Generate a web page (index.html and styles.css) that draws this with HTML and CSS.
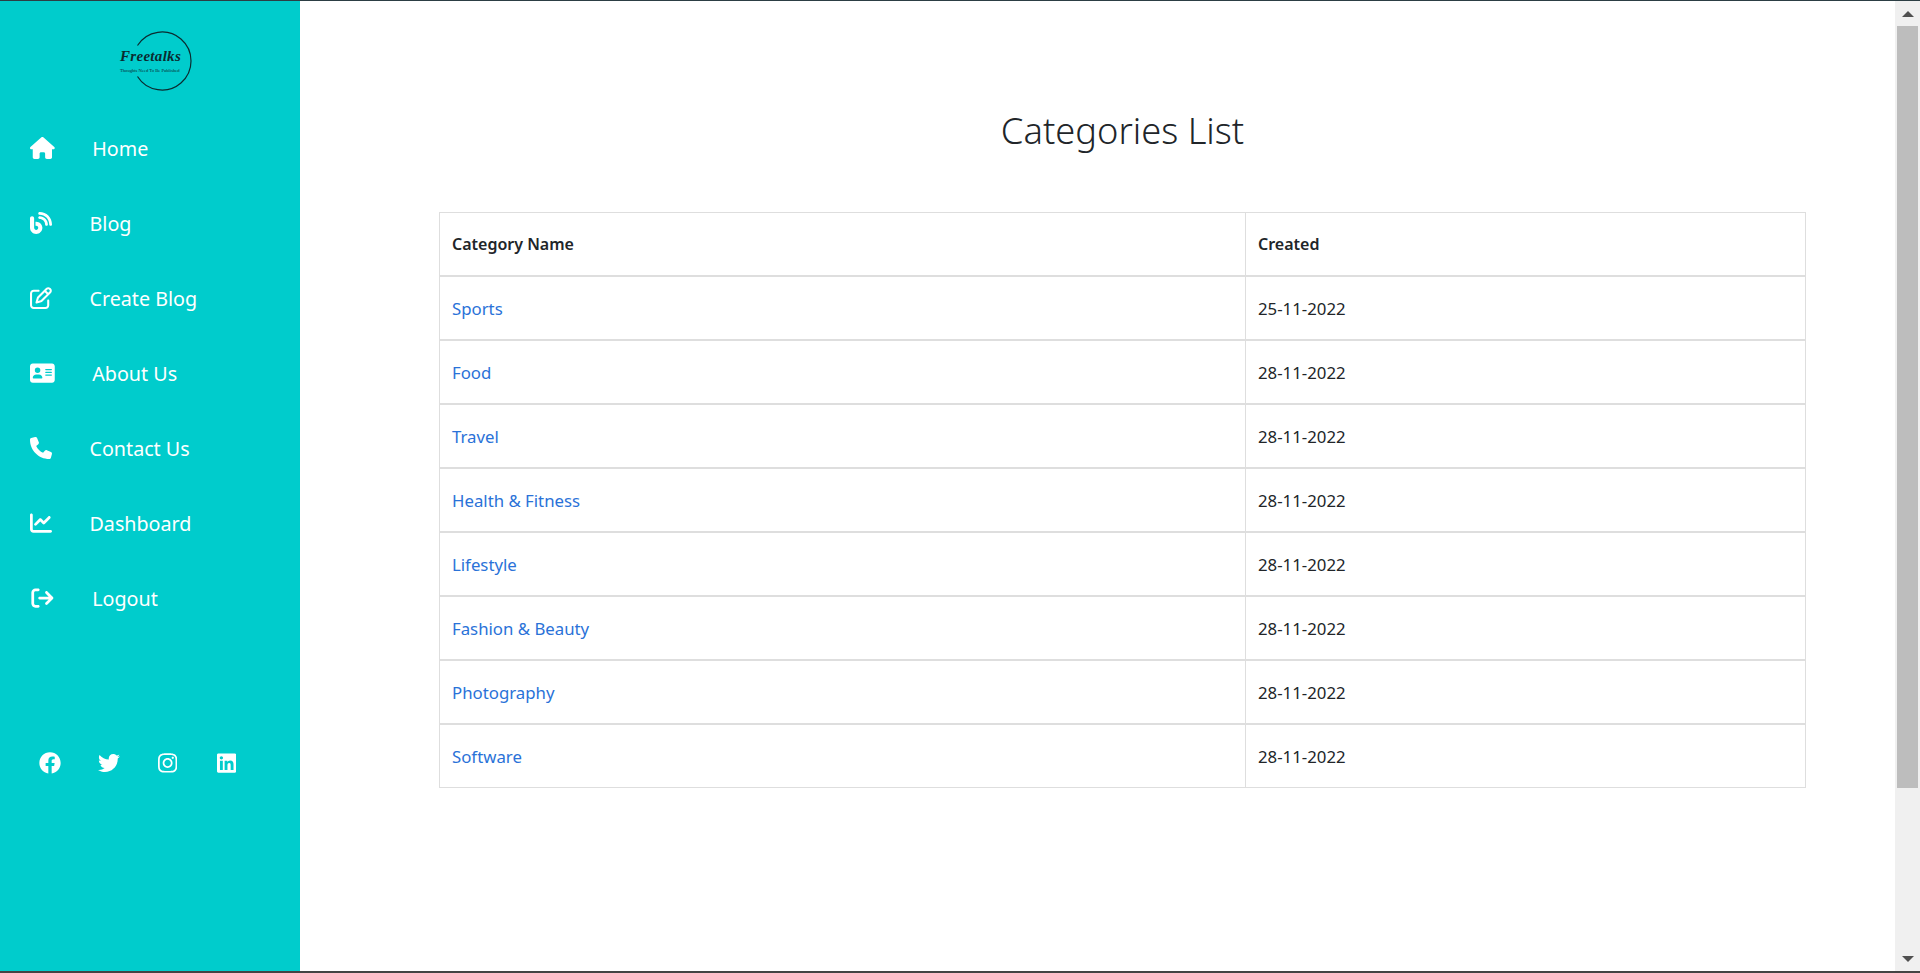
FILE: index.html
```html
<!DOCTYPE html>
<html lang="en">
<head>
    <meta charset="UTF-8">
    <meta name="viewport" content="width=device-width, initial-scale=1.0">
    <title>Categories List</title>
    <link rel="stylesheet" href="styles.css">
</head>
<body>
    <aside class="sidebar">
        <div class="logo">
            <svg class="logo-ring" viewBox="0 0 62 62"><path d="M3.5 15.5 A29 29 0 1 1 3.5 46.5" fill="none" stroke="#0b2b30" stroke-width="1.2"/></svg>
            <div class="logo-name">Freetalks</div>
            <div class="logo-tag">Thoughts Need To Be Published</div>
        </div>
        <nav class="nav">
            <a class="nav-item" href="#">
                <svg class="nav-icon" viewBox="0 0 576 512"><path d="M575.8 255.5c0 18-15 32.1-32 32.1h-32l.7 160.2c0 2.7-.2 5.4-.5 8.1V472c0 22.1-17.9 40-40 40H456c-1.1 0-2.2 0-3.3-.1c-1.4 .1-2.8 .1-4.2 .1H416 392c-22.1 0-40-17.9-40-40V448 384c0-17.7-14.3-32-32-32H256c-17.7 0-32 14.3-32 32v64 24c0 22.1-17.9 40-40 40H160 128.1c-1.5 0-3-.1-4.5-.2c-1.2 .1-2.4 .2-3.6 .2H104c-22.1 0-40-17.9-40-40V360c0-.9 0-1.9 .1-2.8V287.6H32c-18 0-32-14-32-32.1c0-9 3-17 10-24L266.4 8c7-7 15-8 22-8s15 2 21 7L564.8 231.5c8 7 12 15 11 24z"/></svg>
                <span>Home</span>
            </a>
            <a class="nav-item" href="#">
                <svg class="nav-icon" viewBox="0 0 512 512"><path d="M192 32c0 17.7 14.3 32 32 32c123.7 0 224 100.3 224 224c0 17.7 14.3 32 32 32s32-14.3 32-32C512 128.9 383.1 0 224 0c-17.7 0-32 14.3-32 32zm0 96c0 17.7 14.3 32 32 32c70.7 0 128 57.3 128 128c0 17.7 14.3 32 32 32s32-14.3 32-32c0-106-86-192-192-192c-17.7 0-32 14.3-32 32zM96 144c0-26.5-21.5-48-48-48S0 117.5 0 144V368c0 79.5 64.5 144 144 144s144-64.5 144-144s-64.5-144-144-144H128v96h16c26.5 0 48 21.5 48 48s-21.5 48-48 48s-48-21.5-48-48V144z"/></svg>
                <span>Blog</span>
            </a>
            <a class="nav-item" href="#">
                <svg class="nav-icon" viewBox="0 0 512 512"><path d="M441 58.9L453.1 71c9.4 9.4 9.4 24.6 0 33.9L424 134.1 377.9 88 407 58.9c9.4-9.4 24.6-9.4 33.9 0zM209.8 256.2L344 121.9 390.1 168 255.8 302.2c-2.9 2.9-6.5 5-10.4 6.1l-58.5 16.7 16.7-58.5c1.1-3.9 3.2-7.5 6.1-10.4zM373.1 25L175.8 222.2c-8.7 8.7-15 19.4-18.3 31.1l-28.6 100c-2.4 8.4-.1 17.4 6.1 23.6s15.2 8.5 23.6 6.1l100-28.6c11.8-3.4 22.5-9.7 31.1-18.3L487 138.9c28.1-28.1 28.1-73.7 0-101.8L474.9 25C446.8-3.1 401.2-3.1 373.1 25zM88 64C39.4 64 0 103.4 0 152V424c0 48.6 39.4 88 88 88H360c48.6 0 88-39.4 88-88V312c0-13.3-10.7-24-24-24s-24 10.7-24 24V424c0 22.1-17.9 40-40 40H88c-22.1 0-40-17.9-40-40V152c0-22.1 17.9-40 40-40H200c13.3 0 24-10.7 24-24s-10.7-24-24-24H88z"/></svg>
                <span>Create Blog</span>
            </a>
            <a class="nav-item" href="#">
                <svg class="nav-icon" viewBox="0 0 576 512"><path d="M64 32C28.7 32 0 60.7 0 96V416c0 35.3 28.7 64 64 64H512c35.3 0 64-28.7 64-64V96c0-35.3-28.7-64-64-64H64zm80 256h64c44.2 0 80 35.8 80 80c0 8.8-7.2 16-16 16H80c-8.8 0-16-7.2-16-16c0-44.2 35.8-80 80-80zm-32-96a64 64 0 1 1 128 0 64 64 0 1 1 -128 0zm256-32H496c8.8 0 16 7.2 16 16s-7.2 16-16 16H368c-8.8 0-16-7.2-16-16s7.2-16 16-16zm0 64H496c8.8 0 16 7.2 16 16s-7.2 16-16 16H368c-8.8 0-16-7.2-16-16s7.2-16 16-16zm0 64H496c8.8 0 16 7.2 16 16s-7.2 16-16 16H368c-8.8 0-16-7.2-16-16s7.2-16 16-16z"/></svg>
                <span>About Us</span>
            </a>
            <a class="nav-item" href="#">
                <svg class="nav-icon" viewBox="0 0 512 512"><path d="M164.9 24.6c-7.7-18.6-28-28.5-47.4-23.2l-88 24C12.1 30.2 0 46 0 64C0 311.4 200.6 512 448 512c18 0 33.8-12.1 38.6-29.5l24-88c5.3-19.4-4.6-39.7-23.2-47.4l-96-40c-16.3-6.8-35.2-2.1-46.3 11.6L304.7 368C234.3 334.7 177.3 277.7 144 207.3L193.3 167c13.7-11.2 18.4-30 11.6-46.3l-40-96z"/></svg>
                <span>Contact Us</span>
            </a>
            <a class="nav-item" href="#">
                <svg class="nav-icon" viewBox="0 0 512 512"><path d="M64 64c0-17.7-14.3-32-32-32S0 46.3 0 64V400c0 44.2 35.8 80 80 80H480c17.7 0 32-14.3 32-32s-14.3-32-32-32H80c-8.8 0-16-7.2-16-16V64zm406.6 86.6c12.5-12.5 12.5-32.8 0-45.3s-32.8-12.5-45.3 0L320 210.7l-57.4-57.4c-12.5-12.5-32.8-12.5-45.3 0l-112 112c-12.5 12.5-12.5 32.8 0 45.3s32.8 12.5 45.3 0L240 221.3l57.4 57.4c12.5 12.5 32.8 12.5 45.3 0l128-128z"/></svg>
                <span>Dashboard</span>
            </a>
            <a class="nav-item" href="#">
                <svg class="nav-icon" viewBox="-32 0 576 512"><path d="M502.6 278.6c12.5-12.5 12.5-32.8 0-45.3l-128-128c-12.5-12.5-32.8-12.5-45.3 0s-12.5 32.8 0 45.3L402.7 224 192 224c-17.7 0-32 14.3-32 32s14.3 32 32 32l210.7 0-73.4 73.4c-12.5 12.5-12.5 32.8 0 45.3s32.8 12.5 45.3 0l128-128zM160 96c17.7 0 32-14.3 32-32s-14.3-32-32-32L96 32C43 32 0 75 0 128L0 384c0 53 43 96 96 96l64 0c17.7 0 32-14.3 32-32s-14.3-32-32-32l-64 0c-17.7 0-32-14.3-32-32l0-256c0-17.7 14.3-32 32-32l64 0z"/></svg>
                <span>Logout</span>
            </a>
        </nav>
        <div class="social">
            <a class="social-link" href="#"><svg class="social-icon" viewBox="0 0 512 512"><path d="M504 256C504 119 393 8 256 8S8 119 8 256c0 123.78 90.69 226.38 209.25 245V327.69h-63V256h63v-54.64c0-62.15 37-96.48 93.67-96.48 27.14 0 55.52 4.84 55.52 4.84v61h-31.28c-30.8 0-40.41 19.12-40.41 38.73V256h68.78l-11 71.69h-57.78V501C413.31 482.38 504 379.78 504 256z"/></svg></a>
            <a class="social-link" href="#"><svg class="social-icon" viewBox="0 0 512 512"><path d="M459.37 151.716c.325 4.548.325 9.097.325 13.645 0 138.72-105.583 298.558-298.558 298.558-59.452 0-114.68-17.219-161.137-47.106 8.447.974 16.568 1.299 25.34 1.299 49.055 0 94.213-16.568 130.274-44.832-46.132-.975-84.792-31.188-98.112-72.772 6.498.974 12.995 1.624 19.818 1.624 9.421 0 18.843-1.3 27.614-3.573-48.081-9.747-84.143-51.98-84.143-102.985v-1.299c13.969 7.797 30.214 12.67 47.431 13.319-28.264-18.843-46.781-51.005-46.781-87.391 0-19.492 5.197-37.36 14.294-52.954 51.655 63.675 129.3 105.258 216.365 109.807-1.624-7.797-2.599-15.918-2.599-24.04 0-57.828 46.782-104.934 104.934-104.934 30.213 0 57.502 12.67 76.67 33.137 23.715-4.548 46.456-13.32 66.599-25.34-7.798 24.366-24.366 44.833-46.132 57.827 21.117-2.273 41.584-8.122 60.426-16.243-14.292 20.791-32.161 39.308-52.628 54.253z"/></svg></a>
            <a class="social-link" href="#"><svg class="social-icon" viewBox="0 0 448 512"><path d="M224.1 141c-63.6 0-114.9 51.3-114.9 114.9s51.3 114.9 114.9 114.9S339 319.5 339 255.9 287.7 141 224.1 141zm0 189.6c-41.1 0-74.7-33.5-74.7-74.7s33.5-74.7 74.7-74.7 74.7 33.5 74.7 74.7-33.6 74.7-74.7 74.7zm146.4-194.3c0 14.9-12 26.8-26.8 26.8-14.9 0-26.8-12-26.8-26.8s12-26.8 26.8-26.8 26.8 12 26.8 26.8zm76.1 27.2c-1.7-35.9-9.9-67.7-36.2-93.9-26.2-26.2-58-34.4-93.9-36.2-37-2.1-147.9-2.1-184.9 0-35.8 1.7-67.6 9.9-93.9 36.1s-34.4 58-36.2 93.9c-2.1 37-2.1 147.9 0 184.9 1.7 35.9 9.9 67.7 36.2 93.9s58 34.4 93.9 36.2c37 2.1 147.9 2.1 184.9 0 35.9-1.7 67.7-9.9 93.9-36.2 26.2-26.2 34.4-58 36.2-93.9 2.1-37 2.1-147.8 0-184.8zM398.8 388c-7.8 19.6-22.9 34.7-42.6 42.6-29.5 11.7-99.5 9-132.1 9s-102.7 2.6-132.1-9c-19.6-7.8-34.7-22.9-42.6-42.6-11.7-29.5-9-99.5-9-132.1s-2.6-102.7 9-132.1c7.8-19.6 22.9-34.7 42.6-42.6 29.5-11.7 99.5-9 132.1-9s102.7-2.6 132.1 9c19.6 7.8 34.7 22.9 42.6 42.6 11.7 29.5 9 99.5 9 132.1s2.7 102.7-9 132.1z"/></svg></a>
            <a class="social-link" href="#"><svg class="social-icon" viewBox="0 0 448 512"><path d="M416 32H31.9C14.3 32 0 46.5 0 64.3v383.4C0 465.5 14.3 480 31.9 480H416c17.6 0 32-14.5 32-32.3V64.3c0-17.8-14.4-32.3-32-32.3zM135.4 416H69V202.2h66.5V416zm-33.2-243c-21.3 0-38.5-17.3-38.5-38.5S80.9 96 102.2 96c21.2 0 38.5 17.3 38.5 38.5 0 21.3-17.2 38.5-38.5 38.5zm282.1 243h-66.4V312c0-24.8-.5-56.7-34.5-56.7-34.6 0-39.9 26.9-39.9 54.6V416h-66.4V202.2h63.7v29.2h.9c8.9-16.8 30.6-34.5 62.9-34.5 67.2 0 79.7 44.3 79.7 101.9V416z"/></svg></a>
        </div>
    </aside>

    <main class="content">
        <h1 class="page-title">Categories List</h1>
        <table class="cat-table">
            <thead>
                <tr><th class="col-name">Category Name</th><th>Created</th></tr>
            </thead>
            <tbody>
                <tr><td><a href="#">Sports</a></td><td>25-11-2022</td></tr>
                <tr><td><a href="#">Food</a></td><td>28-11-2022</td></tr>
                <tr><td><a href="#">Travel</a></td><td>28-11-2022</td></tr>
                <tr><td><a href="#">Health &amp; Fitness</a></td><td>28-11-2022</td></tr>
                <tr><td><a href="#">Lifestyle</a></td><td>28-11-2022</td></tr>
                <tr><td><a href="#">Fashion &amp; Beauty</a></td><td>28-11-2022</td></tr>
                <tr><td><a href="#">Photography</a></td><td>28-11-2022</td></tr>
                <tr><td><a href="#">Software</a></td><td>28-11-2022</td></tr>
            </tbody>
        </table>
    </main>

    <div class="scrollbar">
        <div class="arrow-box"><span class="arrow-up"></span></div>
        <div class="thumb"></div>
        <div class="track-rest"></div>
        <div class="arrow-box"><span class="arrow-down"></span></div>
    </div>
</body>
</html>
```

FILE: styles.css
```css
* {
    box-sizing: border-box;
}
html {
    height: 100%;
}
body {
    margin: 0;
    height: 973px;
    overflow: hidden;
    display: flex;
    border-top: 1px solid #2c3e44;
    border-bottom: 2px solid #444444;
    background-color: #ffffff;
    color: #212529;
    font-family: "Noto Sans", sans-serif;
}

/* sidebar */
.sidebar {
    width: 300px;
    flex-shrink: 0;
    background-color: #00cccc;
    padding-top: 29px;
}
.logo {
    position: relative;
    height: 81px;
    margin-left: 120px;
    padding-top: 16px;
}
.logo-ring {
    position: absolute;
    left: 14px;
    top: 0;
    width: 62px;
    height: 62px;
}
.logo-name {
    font-family: "Liberation Serif", serif;
    font-style: italic;
    font-weight: bold;
    font-size: 15px;
    line-height: 20px;
    color: #0b2b30;
    letter-spacing: 0.3px;
}
.logo-tag {
    font-family: "Liberation Serif", serif;
    font-size: 4.6px;
    line-height: 7px;
    margin-top: 1px;
    color: #0b2b30;
    white-space: nowrap;
}
.nav {
    display: flex;
    flex-direction: column;
}
.nav-item {
    display: flex;
    align-items: center;
    gap: 37.5px;
    height: 75px;
    padding-left: 30px;
    color: #ffffff;
    font-size: 19.7px;
    text-decoration: none;
}
.nav-icon {
    height: 22px;
    flex-shrink: 0;
    fill: #ffffff;
    margin-top: -1px;
}
.social {
    display: flex;
    margin-top: 116px;
    padding-left: 20px;
}
.social-link {
    display: flex;
    justify-content: center;
    width: 59px;
}
.social-icon {
    height: 22px;
    fill: #ffffff;
}

/* main */
.content {
    flex: 1;
    min-width: 0;
    padding: 105px 89px 0 139px;
}
.page-title {
    margin: 0 0 58px;
    font-size: 36.3px;
    font-weight: 350;
    line-height: 48px;
    text-align: center;
}
.cat-table {
    width: 100%;
    table-layout: fixed;
    border-collapse: collapse;
    font-size: 16.8px;
}
.cat-table th,
.cat-table td {
    height: 64px;
    padding: 2px 12px 0;
    border: 1px solid #dedede;
    border-bottom-width: 2px;
    text-align: left;
}
.cat-table th {
    height: 63px;
    padding-top: 0;
    font-size: 16px;
    font-weight: 600;
}
.cat-table tbody tr:last-child td {
    border-bottom-width: 1px;
}
.col-name {
    width: 806px;
}
.cat-table a {
    color: #2a72d8;
    text-decoration: none;
}

/* fake browser scrollbar */
.scrollbar {
    width: 25px;
    flex-shrink: 0;
    display: flex;
    flex-direction: column;
    background-color: #f0f0f0;
    padding-left: 2px;
    padding-right: 2px;
}
.arrow-box {
    height: 25px;
    display: flex;
    align-items: center;
    justify-content: center;
}
.arrow-up {
    border-left: 6px solid transparent;
    border-right: 6px solid transparent;
    border-bottom: 6px solid #505050;
}
.arrow-down {
    border-left: 6px solid transparent;
    border-right: 6px solid transparent;
    border-top: 6px solid #505050;
}
.thumb {
    height: 762px;
    background-color: #bdbdbd;
}
.track-rest {
    flex: 1;
}
```
